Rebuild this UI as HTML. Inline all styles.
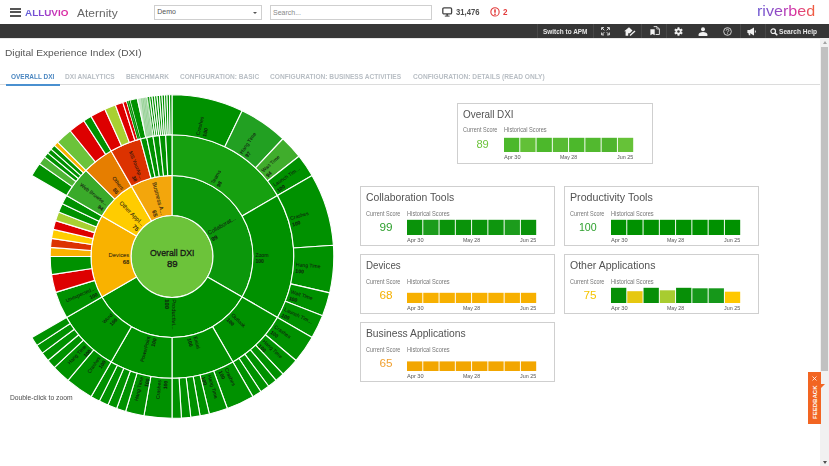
<!DOCTYPE html>
<html><head><meta charset="utf-8">
<style>
*{margin:0;padding:0;box-sizing:border-box}
html,body{width:829px;height:466px;overflow:hidden;background:#fff;font-family:"Liberation Sans",sans-serif;color:#444}
.a{position:absolute}
.t{position:absolute;white-space:nowrap;transform-origin:0 0;line-height:1}
#hdr{left:0;top:0;width:829px;height:24px;background:#fff}
#bar{left:0;top:23.8px;width:829px;height:13.8px;background:#363636}
.sep{position:absolute;top:24px;width:1px;height:14px;background:#474747}
.card{position:absolute;border:1px solid #cfcfcf;background:#fff}
.bars{position:absolute;height:16px}
.bar{position:absolute;bottom:0;width:15.3px}
.sb{position:absolute;left:0;top:0}
</style></head><body>
<div id="hdr" class="a"></div>
<div class="a" style="left:10px;top:8px;width:10.5px;height:1.8px;background:#555"></div>
<div class="a" style="left:10px;top:11.4px;width:10.5px;height:1.8px;background:#555"></div>
<div class="a" style="left:10px;top:14.8px;width:10.5px;height:1.8px;background:#555"></div>
<div class="t" style="left:25.00px;top:8.48px;font-size:9.9px;font-weight:bold;color:transparent;background:linear-gradient(90deg,#5b5fd6,#8b45d2 40%,#c733b8 70%,#e0259a);-webkit-background-clip:text;background-clip:text;">ALLUVIO</div>
<div class="t" style="left:76.80px;top:7.85px;font-size:11px;color:#666;transform:scaleX(1.090);">Aternity</div>
<div class="a" style="left:153.5px;top:4.5px;width:108px;height:15px;border:1px solid #cfcfcf"></div>
<div class="t" style="left:157.30px;top:8.35px;font-size:7px;color:#555;">Demo</div>
<div class="a" style="left:253px;top:11.5px;width:0;height:0;border-left:2.5px solid transparent;border-right:2.5px solid transparent;border-top:2.8px solid #555"></div>
<div class="a" style="left:270px;top:4.5px;width:162px;height:15px;border:1px solid #cfcfcf"></div>
<div class="t" style="left:273.00px;top:8.65px;font-size:7px;color:#888;">Search...</div>
<svg class="a" style="left:442px;top:7px" width="11" height="10" viewBox="0 0 11 10"><rect x="0.8" y="0.8" width="8.8" height="6.1" rx="1.2" fill="none" stroke="#444" stroke-width="1.3"/><rect x="4.3" y="7" width="1.8" height="1.8" fill="#444"/><rect x="2.8" y="8.6" width="4.8" height="1" fill="#444"/></svg>
<div class="t" style="left:455.90px;top:7.75px;font-size:9px;font-weight:bold;color:#4d4d4d;transform:scaleX(0.850);">31,476</div>
<svg class="a" style="left:490px;top:7px" width="10" height="10" viewBox="0 0 10 10"><circle cx="5" cy="4.9" r="4.15" fill="none" stroke="#e23b3b" stroke-width="1.1"/><rect x="4.2" y="2.3" width="1.6" height="3.5" rx="0.5" fill="#e23b3b"/><rect x="4.2" y="6.4" width="1.6" height="1.5" rx="0.5" fill="#e23b3b"/></svg>
<div class="t" style="left:503.20px;top:7.75px;font-size:9px;font-weight:bold;color:#e23b3b;transform:scaleX(0.900);">2</div>
<div class="t" style="left:756.50px;top:3.15px;font-size:15px;color:transparent;transform:scaleX(1.075);background:linear-gradient(90deg,#6a55d0,#9248c4 35%,#d42fa8 62%,#f2603a);-webkit-background-clip:text;background-clip:text;">riverbed</div>
<div id="bar" class="a"></div>
<div class="a" style="left:0;top:38px;width:829px;height:1px;background:#e8e8e8"></div>
<div class="sep" style="left:536.5px"></div>
<div class="sep" style="left:592.5px"></div>
<div class="sep" style="left:641px"></div>
<div class="sep" style="left:666px"></div>
<div class="sep" style="left:739.5px"></div>
<div class="sep" style="left:765px"></div>
<div class="t" style="left:542.7px;top:28.2px;font-size:7px;font-weight:bold;color:#e6e6e6;transform:scaleX(0.92)">Switch to APM</div>
<!-- fullscreen icon -->
<svg class="a" style="left:600.5px;top:27px" width="9" height="8.5" viewBox="0 0 9 8.5"><g fill="none" stroke="#ddd" stroke-width="1"><path d="M0.6 3V0.6H3M0.8 0.8L3.3 3.3"/><path d="M8.4 3V0.6H6M8.2 0.8L5.7 3.3"/><path d="M0.6 5.5V7.9H3M0.8 7.7L3.3 5.2"/><path d="M8.4 5.5V7.9H6M8.2 7.7L5.7 5.2"/></g></svg>
<!-- house edit -->
<svg class="a" style="left:624px;top:26.7px" width="12" height="9" viewBox="0 0 12 9"><path d="M5 0.2L0.2 4.2h1.4v4.5h2.6V6.3h1.6l2.7-2.7L5 0.2z" fill="#f2f2f2"/><path d="M6 8.4l5-4.4" stroke="#f2f2f2" stroke-width="1.3"/></svg>
<!-- copy icon -->
<svg class="a" style="left:649.5px;top:26.3px" width="10" height="9.5" viewBox="0 0 10 9.5"><path d="M3.7 0.6h3.3l2.4 2.4v5.5H5.6" fill="none" stroke="#eee" stroke-width="0.9"/><path d="M6.8 0.6v2.4h2.6" fill="none" stroke="#eee" stroke-width="0.7"/><path d="M0.4 3.2h4.3v6.1l-2.15-1.4-2.15 1.4z" fill="#f2f2f2"/></svg>
<!-- gear -->
<svg class="a" style="left:674px;top:27px" width="9" height="9" viewBox="0 0 10 10"><g fill="#eee"><circle cx="5" cy="5" r="3.3"/><rect x="3.9" y="0.2" width="2.2" height="9.6" rx="0.4"/><rect x="3.9" y="0.2" width="2.2" height="9.6" rx="0.4" transform="rotate(60 5 5)"/><rect x="3.9" y="0.2" width="2.2" height="9.6" rx="0.4" transform="rotate(-60 5 5)"/></g><circle cx="5" cy="5" r="1.4" fill="#363636"/></svg>
<!-- person -->
<svg class="a" style="left:698.3px;top:27px" width="10" height="9" viewBox="0 0 10 9" fill="#f0f0f0"><circle cx="5" cy="2.2" r="2"/><path d="M0.6 8.9V7.6C0.6 6 2.6 5 5 5S9.4 6 9.4 7.6V8.9z"/></svg>
<!-- question -->
<svg class="a" style="left:722.8px;top:27px" width="9" height="9" viewBox="0 0 9 9"><circle cx="4.5" cy="4.5" r="3.85" fill="none" stroke="#e6e6e6" stroke-width="0.85"/><path d="M3.2 3.6c0-0.8 0.55-1.35 1.3-1.35s1.3 0.5 1.3 1.2c0 0.95-1.25 1-1.25 2" fill="none" stroke="#e6e6e6" stroke-width="0.85"/><circle cx="4.55" cy="6.65" r="0.5" fill="#e6e6e6"/></svg>
<!-- megaphone -->
<svg class="a" style="left:747.3px;top:27.2px" width="10" height="9" viewBox="0 0 10 9" fill="#f0f0f0"><path d="M0.4 3.1h2.3L7 0.5v8L2.7 5.9H0.4z"/><path d="M1.3 5.6h1.5l0.6 2.6H1.9z"/><path d="M7.9 3c0.7 0.35 1 0.85 1 1.5s-0.3 1.15-1 1.5z"/></svg>
<!-- search help -->
<svg class="a" style="left:770px;top:27.5px" width="8" height="8" viewBox="0 0 8 8"><circle cx="3.2" cy="3.2" r="2.3" fill="none" stroke="#eee" stroke-width="1.2"/><path d="M4.9 4.9l2.4 2.4" stroke="#eee" stroke-width="1.5"/></svg>
<div class="t" style="left:778.5px;top:28.2px;font-size:7px;font-weight:bold;color:#e6e6e6;transform:scaleX(0.94)">Search Help</div>

<div class="t" style="left:4.80px;top:48.68px;font-size:9.2px;color:#555;transform:scaleX(1.110);">Digital Experience Index (DXI)</div>
<div class="a" style="left:0;top:84px;width:820px;height:1px;background:#dcdcdc"></div>
<div class="a" style="left:5.8px;top:83.7px;width:53.8px;height:2px;background:#4a90d0"></div>
<div class="t" style="left:11.00px;top:72.66px;font-size:7.7px;font-weight:bold;color:#4a86c0;transform:scaleX(0.841);">OVERALL DXI</div>
<div class="t" style="left:65.10px;top:72.66px;font-size:7.7px;font-weight:bold;color:#b8bec4;transform:scaleX(0.856);">DXI ANALYTICS</div>
<div class="t" style="left:125.90px;top:72.66px;font-size:7.7px;font-weight:bold;color:#b8bec4;transform:scaleX(0.852);">BENCHMARK</div>
<div class="t" style="left:180.10px;top:72.66px;font-size:7.7px;font-weight:bold;color:#b8bec4;transform:scaleX(0.851);">CONFIGURATION: BASIC</div>
<div class="t" style="left:270.10px;top:72.66px;font-size:7.7px;font-weight:bold;color:#b8bec4;transform:scaleX(0.860);">CONFIGURATION: BUSINESS ACTIVITIES</div>
<div class="t" style="left:412.90px;top:72.66px;font-size:7.7px;font-weight:bold;color:#b8bec4;transform:scaleX(0.860);">CONFIGURATION: DETAILS (READ ONLY)</div>
<svg class="sb" width="345" height="466" viewBox="0 0 345 466"><g stroke="#fff" stroke-width="1.1" stroke-linejoin="round">
<circle cx="172.0" cy="256.5" r="41" fill="#6cc33a"/>
<path d="M172.00,175.50A81,81 0 0 1 242.15,297.00L207.51,277.00A41,41 0 0 0 172.00,215.50Z" fill="#0b970b"/>
<path d="M242.15,297.00A81,81 0 0 1 101.85,297.00L136.49,277.00A41,41 0 0 0 207.51,277.00Z" fill="#009100"/>
<path d="M101.85,297.00A81,81 0 0 1 101.85,216.00L136.49,236.00A41,41 0 0 0 136.49,277.00Z" fill="#f9b200"/>
<path d="M101.85,216.00A81,81 0 0 1 131.50,186.35L151.50,220.99A41,41 0 0 0 136.49,236.00Z" fill="#ffcc00"/>
<path d="M131.50,186.35A81,81 0 0 1 172.00,175.50L172.00,215.50A41,41 0 0 0 151.50,220.99Z" fill="#f3a60c"/>
<path d="M172.00,134.70A121.8,121.8 0 0 1 277.48,195.60L242.15,216.00A81,81 0 0 0 172.00,175.50Z" fill="#16a010"/>
<path d="M277.48,195.60A121.8,121.8 0 0 1 277.48,317.40L242.15,297.00A81,81 0 0 0 242.15,216.00Z" fill="#009100"/>
<path d="M277.48,317.40A121.8,121.8 0 0 1 232.90,361.98L212.50,326.65A81,81 0 0 0 242.15,297.00Z" fill="#009100"/>
<path d="M232.90,361.98A121.8,121.8 0 0 1 172.00,378.30L172.00,337.50A81,81 0 0 0 212.50,326.65Z" fill="#009100"/>
<path d="M172.00,378.30A121.8,121.8 0 0 1 111.10,361.98L131.50,326.65A81,81 0 0 0 172.00,337.50Z" fill="#009100"/>
<path d="M111.10,361.98A121.8,121.8 0 0 1 66.52,317.40L101.85,297.00A81,81 0 0 0 131.50,326.65Z" fill="#009100"/>
<path d="M66.52,317.40A121.8,121.8 0 0 1 55.61,292.40L94.60,280.38A81,81 0 0 0 101.85,297.00Z" fill="#009100"/>
<path d="M55.61,292.40A121.8,121.8 0 0 1 51.56,274.65L91.90,268.57A81,81 0 0 0 94.60,280.38Z" fill="#dd0000"/>
<path d="M51.56,274.65A121.8,121.8 0 0 1 50.20,256.50L91.00,256.50A81,81 0 0 0 91.90,268.57Z" fill="#009100"/>
<path d="M50.20,256.50A121.8,121.8 0 0 1 50.54,247.40L91.23,250.45A81,81 0 0 0 91.00,256.50Z" fill="#f9b200"/>
<path d="M50.54,247.40A121.8,121.8 0 0 1 51.56,238.35L91.90,244.43A81,81 0 0 0 91.23,250.45Z" fill="#dc3200"/>
<path d="M51.56,238.35A121.8,121.8 0 0 1 53.25,229.40L93.03,238.48A81,81 0 0 0 91.90,244.43Z" fill="#ffcc00"/>
<path d="M53.25,229.40A121.8,121.8 0 0 1 55.61,220.60L94.60,232.62A81,81 0 0 0 93.03,238.48Z" fill="#dd0000"/>
<path d="M55.61,220.60A121.8,121.8 0 0 1 58.62,212.00L96.60,226.91A81,81 0 0 0 94.60,232.62Z" fill="#a8d032"/>
<path d="M58.62,212.00A121.8,121.8 0 0 1 62.26,203.65L99.02,221.36A81,81 0 0 0 96.60,226.91Z" fill="#009100"/>
<path d="M62.26,203.65A121.8,121.8 0 0 1 66.52,195.60L101.85,216.00A81,81 0 0 0 99.02,221.36Z" fill="#009100"/>
<path d="M66.52,195.60A121.8,121.8 0 0 1 85.87,170.37L114.72,199.22A81,81 0 0 0 101.85,216.00Z" fill="#3aaa2a"/>
<path d="M85.87,170.37A121.8,121.8 0 0 1 111.10,151.02L131.50,186.35A81,81 0 0 0 114.72,199.22Z" fill="#e67e00"/>
<path d="M111.10,151.02A121.8,121.8 0 0 1 140.48,138.85L151.04,178.26A81,81 0 0 0 131.50,186.35Z" fill="#dc3200"/>
<path d="M140.48,138.85A121.8,121.8 0 0 1 146.68,137.36L155.16,177.27A81,81 0 0 0 151.04,178.26Z" fill="#009100"/>
<path d="M146.68,137.36A121.8,121.8 0 0 1 152.95,136.20L159.33,176.50A81,81 0 0 0 155.16,177.27Z" fill="#009100"/>
<path d="M152.95,136.20A121.8,121.8 0 0 1 159.27,135.37L163.53,175.94A81,81 0 0 0 159.33,176.50Z" fill="#009100"/>
<path d="M159.27,135.37A121.8,121.8 0 0 1 165.63,134.87L167.76,175.61A81,81 0 0 0 163.53,175.94Z" fill="#009100"/>
<path d="M165.63,134.87A121.8,121.8 0 0 1 172.00,134.70L172.00,175.50A81,81 0 0 0 167.76,175.61Z" fill="#009100"/>
<path d="M172.00,94.70A161.8,161.8 0 0 1 242.17,110.71L224.82,146.75A121.8,121.8 0 0 0 172.00,134.70Z" fill="#009100"/>
<path d="M242.17,110.71A161.8,161.8 0 0 1 282.97,138.75L255.53,167.86A121.8,121.8 0 0 0 224.82,146.75Z" fill="#22a022"/>
<path d="M282.97,138.75A161.8,161.8 0 0 1 298.98,156.22L267.59,181.01A121.8,121.8 0 0 0 255.53,167.86Z" fill="#40ad2c"/>
<path d="M298.98,156.22A161.8,161.8 0 0 1 312.12,175.60L277.48,195.60A121.8,121.8 0 0 0 267.59,181.01Z" fill="#009100"/>
<path d="M312.12,175.60A161.8,161.8 0 0 1 333.41,245.21L293.50,248.00A121.8,121.8 0 0 0 277.48,195.60Z" fill="#009100"/>
<path d="M333.41,245.21A161.8,161.8 0 0 1 329.65,292.90L290.68,283.90A121.8,121.8 0 0 0 293.50,248.00Z" fill="#009100"/>
<path d="M329.65,292.90A161.8,161.8 0 0 1 322.54,315.80L285.32,301.14A121.8,121.8 0 0 0 290.68,283.90Z" fill="#009100"/>
<path d="M322.54,315.80A161.8,161.8 0 0 1 312.12,337.40L277.48,317.40A121.8,121.8 0 0 0 285.32,301.14Z" fill="#009100"/>
<path d="M312.12,337.40A161.8,161.8 0 0 1 295.95,360.50L265.30,334.79A121.8,121.8 0 0 0 277.48,317.40Z" fill="#009100"/>
<path d="M295.95,360.50A161.8,161.8 0 0 1 283.03,374.19L255.58,345.09A121.8,121.8 0 0 0 265.30,334.79Z" fill="#009100"/>
<path d="M283.03,374.19A161.8,161.8 0 0 1 276.00,380.45L250.29,349.80A121.8,121.8 0 0 0 255.58,345.09Z" fill="#009100"/>
<path d="M276.00,380.45A161.8,161.8 0 0 1 268.62,386.28L244.73,354.20A121.8,121.8 0 0 0 250.29,349.80Z" fill="#009100"/>
<path d="M268.62,386.28A161.8,161.8 0 0 1 260.91,391.68L238.93,358.26A121.8,121.8 0 0 0 244.73,354.20Z" fill="#009100"/>
<path d="M260.91,391.68A161.8,161.8 0 0 1 252.90,396.62L232.90,361.98A121.8,121.8 0 0 0 238.93,358.26Z" fill="#009100"/>
<path d="M252.90,396.62A161.8,161.8 0 0 1 227.34,408.54L213.66,370.95A121.8,121.8 0 0 0 232.90,361.98Z" fill="#009100"/>
<path d="M227.34,408.54A161.8,161.8 0 0 1 209.31,413.94L200.09,375.02A121.8,121.8 0 0 0 213.66,370.95Z" fill="#009100"/>
<path d="M209.31,413.94A161.8,161.8 0 0 1 200.10,415.84L193.15,376.45A121.8,121.8 0 0 0 200.09,375.02Z" fill="#009100"/>
<path d="M200.10,415.84A161.8,161.8 0 0 1 190.78,417.21L186.14,377.48A121.8,121.8 0 0 0 193.15,376.45Z" fill="#009100"/>
<path d="M190.78,417.21A161.8,161.8 0 0 1 181.41,418.03L179.08,378.09A121.8,121.8 0 0 0 186.14,377.48Z" fill="#009100"/>
<path d="M181.41,418.03A161.8,161.8 0 0 1 172.00,418.30L172.00,378.30A121.8,121.8 0 0 0 179.08,378.09Z" fill="#009100"/>
<path d="M172.00,418.30A161.8,161.8 0 0 1 143.90,415.84L150.85,376.45A121.8,121.8 0 0 0 172.00,378.30Z" fill="#009100"/>
<path d="M143.90,415.84A161.8,161.8 0 0 1 125.60,411.50L137.07,373.18A121.8,121.8 0 0 0 150.85,376.45Z" fill="#009100"/>
<path d="M125.60,411.50A161.8,161.8 0 0 1 116.66,408.54L130.34,370.95A121.8,121.8 0 0 0 137.07,373.18Z" fill="#009100"/>
<path d="M116.66,408.54A161.8,161.8 0 0 1 107.91,405.07L123.76,368.34A121.8,121.8 0 0 0 130.34,370.95Z" fill="#009100"/>
<path d="M107.91,405.07A161.8,161.8 0 0 1 99.38,401.09L117.34,365.34A121.8,121.8 0 0 0 123.76,368.34Z" fill="#009100"/>
<path d="M99.38,401.09A161.8,161.8 0 0 1 91.10,396.62L111.10,361.98A121.8,121.8 0 0 0 117.34,365.34Z" fill="#009100"/>
<path d="M91.10,396.62A161.8,161.8 0 0 1 68.00,380.45L93.71,349.80A121.8,121.8 0 0 0 111.10,361.98Z" fill="#009100"/>
<path d="M68.00,380.45A161.8,161.8 0 0 1 54.31,367.53L83.41,340.08A121.8,121.8 0 0 0 93.71,349.80Z" fill="#009100"/>
<path d="M54.31,367.53A161.8,161.8 0 0 1 48.05,360.50L78.70,334.79A121.8,121.8 0 0 0 83.41,340.08Z" fill="#009100"/>
<path d="M48.05,360.50A161.8,161.8 0 0 1 42.22,353.12L74.30,329.23A121.8,121.8 0 0 0 78.70,334.79Z" fill="#009100"/>
<path d="M42.22,353.12A161.8,161.8 0 0 1 36.82,345.41L70.24,323.43A121.8,121.8 0 0 0 74.30,329.23Z" fill="#009100"/>
<path d="M36.82,345.41A161.8,161.8 0 0 1 31.88,337.40L66.52,317.40A121.8,121.8 0 0 0 70.24,323.43Z" fill="#009100"/>
<path d="M31.88,175.60A161.8,161.8 0 0 1 39.46,163.70L72.23,186.64A121.8,121.8 0 0 0 66.52,195.60Z" fill="#009100"/>
<path d="M39.46,163.70A161.8,161.8 0 0 1 44.50,156.89L76.02,181.51A121.8,121.8 0 0 0 72.23,186.64Z" fill="#4fb535"/>
<path d="M44.50,156.89A161.8,161.8 0 0 1 47.69,152.93L78.42,178.53A121.8,121.8 0 0 0 76.02,181.51Z" fill="#009100"/>
<path d="M47.69,152.93A161.8,161.8 0 0 1 51.01,149.08L80.92,175.63A121.8,121.8 0 0 0 78.42,178.53Z" fill="#009100"/>
<path d="M51.01,149.08A161.8,161.8 0 0 1 54.44,145.33L83.50,172.81A121.8,121.8 0 0 0 80.92,175.63Z" fill="#009100"/>
<path d="M54.44,145.33A161.8,161.8 0 0 1 57.59,142.09L85.87,170.37A121.8,121.8 0 0 0 83.50,172.81Z" fill="#f9b200"/>
<path d="M57.59,142.09A161.8,161.8 0 0 1 70.18,130.76L95.35,161.84A121.8,121.8 0 0 0 85.87,170.37Z" fill="#6cc33a"/>
<path d="M70.18,130.76A161.8,161.8 0 0 1 83.88,120.80L105.66,154.35A121.8,121.8 0 0 0 95.35,161.84Z" fill="#dd0000"/>
<path d="M83.88,120.80A161.8,161.8 0 0 1 91.10,116.38L111.10,151.02A121.8,121.8 0 0 0 105.66,154.35Z" fill="#009100"/>
<path d="M91.10,116.38A161.8,161.8 0 0 1 104.90,109.27L121.49,145.67A121.8,121.8 0 0 0 111.10,151.02Z" fill="#dd0000"/>
<path d="M104.90,109.27A161.8,161.8 0 0 1 115.34,104.95L129.34,142.41A121.8,121.8 0 0 0 121.49,145.67Z" fill="#a8d032"/>
<path d="M115.34,104.95A161.8,161.8 0 0 1 122.81,102.36L134.97,140.47A121.8,121.8 0 0 0 129.34,142.41Z" fill="#dd0000"/>
<path d="M122.81,102.36A161.8,161.8 0 0 1 126.59,101.20L137.81,139.60A121.8,121.8 0 0 0 134.97,140.47Z" fill="#dd0000"/>
<path d="M126.59,101.20A161.8,161.8 0 0 1 129.85,100.29L140.27,138.91A121.8,121.8 0 0 0 137.81,139.60Z" fill="#ffffff"/>
<path d="M129.85,100.29A161.8,161.8 0 0 1 137.26,98.47L145.85,137.54A121.8,121.8 0 0 0 140.27,138.91Z" fill="#009100"/>
<path d="M137.26,98.47A161.8,161.8 0 0 1 146.97,96.65L153.16,136.17A121.8,121.8 0 0 0 145.85,137.54Z" fill="#c4e4c4"/>
<path d="M146.97,96.65A161.8,161.8 0 0 1 149.45,96.28L155.03,135.89A121.8,121.8 0 0 0 153.16,136.17Z" fill="#009100"/>
<path d="M149.45,96.28A161.8,161.8 0 0 1 151.95,95.95L156.90,135.64A121.8,121.8 0 0 0 155.03,135.89Z" fill="#009100"/>
<path d="M151.95,95.95A161.8,161.8 0 0 1 154.44,95.66L158.78,135.42A121.8,121.8 0 0 0 156.90,135.64Z" fill="#009100"/>
<path d="M154.44,95.66A161.8,161.8 0 0 1 156.94,95.40L160.66,135.23A121.8,121.8 0 0 0 158.78,135.42Z" fill="#009100"/>
<path d="M156.94,95.40A161.8,161.8 0 0 1 159.45,95.19L162.55,135.07A121.8,121.8 0 0 0 160.66,135.23Z" fill="#009100"/>
<path d="M159.45,95.19A161.8,161.8 0 0 1 161.95,95.01L164.44,134.94A121.8,121.8 0 0 0 162.55,135.07Z" fill="#009100"/>
<path d="M161.95,95.01A161.8,161.8 0 0 1 164.46,94.88L166.33,134.83A121.8,121.8 0 0 0 164.44,134.94Z" fill="#009100"/>
<path d="M164.46,94.88A161.8,161.8 0 0 1 166.97,94.78L168.22,134.76A121.8,121.8 0 0 0 166.33,134.83Z" fill="#009100"/>
<path d="M166.97,94.78A161.8,161.8 0 0 1 169.49,94.72L170.11,134.71A121.8,121.8 0 0 0 168.22,134.76Z" fill="#009100"/>
<path d="M169.49,94.72A161.8,161.8 0 0 1 172.00,94.70L172.00,134.70A121.8,121.8 0 0 0 170.11,134.71Z" fill="#009100"/>
<path d="M138.23,138.75L127.48,101.26" stroke="#009100" stroke-width="1.4"/>
<path d="M139.47,138.40L129.11,100.80" stroke="#009100" stroke-width="1.4"/>
<path d="M146.26,136.43L141.59,98.60" stroke="#6abf6a" stroke-width="0.5"/>
<path d="M147.41,136.19L143.11,98.32" stroke="#6abf6a" stroke-width="0.5"/>
<path d="M148.57,135.96L144.63,98.05" stroke="#6abf6a" stroke-width="0.5"/>
<path d="M149.73,135.74L146.15,97.79" stroke="#6abf6a" stroke-width="0.5"/>
<path d="M150.89,135.53L147.68,97.55" stroke="#6abf6a" stroke-width="0.5"/>
<path d="M152.05,135.33L149.20,97.32" stroke="#6abf6a" stroke-width="0.5"/>
</g><g fill="#111" fill-opacity="0.85" stroke="#111" stroke-opacity="0.5" stroke-width="0.15" font-family="Liberation Sans, sans-serif"><g transform="translate(209.07,235.10) rotate(-30.00)"><text x="0" y="0" font-size="5.8" text-anchor="start">Collaborat...</text><text x="0" y="7.4" font-size="5.8" font-weight="bold" text-anchor="start">99</text></g>
<g transform="translate(172.00,299.30) rotate(90.00)"><text x="0" y="0" font-size="5.8" text-anchor="start">Productivi...</text><text x="0" y="7.4" font-size="5.8" font-weight="bold" text-anchor="start">100</text></g>
<g transform="translate(129.20,256.50) rotate(0.00)"><text x="0" y="0" font-size="5.8" text-anchor="end">Devices</text><text x="0" y="7.4" font-size="5.8" font-weight="bold" text-anchor="end">68</text></g>
<g transform="translate(141.74,226.24) rotate(45.00)"><text x="0" y="0" font-size="5.8" text-anchor="end">Other Appl...</text><text x="0" y="7.4" font-size="5.8" font-weight="bold" text-anchor="end">75</text></g>
<g transform="translate(160.92,215.16) rotate(75.00)"><text x="0" y="0" font-size="5.8" text-anchor="end">Business A...</text><text x="0" y="7.4" font-size="5.8" font-weight="bold" text-anchor="end">65</text></g>
<g transform="translate(213.70,184.27) rotate(-60.00)"><text x="0" y="0" font-size="5.1" text-anchor="start">Teams</text><text x="0" y="6.6" font-size="5.1" font-weight="bold" text-anchor="start">98</text></g>
<g transform="translate(255.40,256.50) rotate(0.00)"><text x="0" y="0" font-size="5.1" text-anchor="start">Zoom</text><text x="0" y="6.6" font-size="5.1" font-weight="bold" text-anchor="start">100</text></g>
<g transform="translate(230.97,315.47) rotate(45.00)"><text x="0" y="0" font-size="5.1" text-anchor="start">Outlook</text><text x="0" y="6.6" font-size="5.1" font-weight="bold" text-anchor="start">100</text></g>
<g transform="translate(193.59,337.06) rotate(75.00)"><text x="0" y="0" font-size="5.1" text-anchor="start">Excel</text><text x="0" y="6.6" font-size="5.1" font-weight="bold" text-anchor="start">100</text></g>
<g transform="translate(150.41,337.06) rotate(-75.00)"><text x="0" y="0" font-size="5.1" text-anchor="end">PowerPoint</text><text x="0" y="6.6" font-size="5.1" font-weight="bold" text-anchor="end">100</text></g>
<g transform="translate(113.03,315.47) rotate(-45.00)"><text x="0" y="0" font-size="5.1" text-anchor="end">Word</text><text x="0" y="6.6" font-size="5.1" font-weight="bold" text-anchor="end">100</text></g>
<g transform="translate(95.56,289.85) rotate(-23.57)"><text x="0" y="0" font-size="5.1" text-anchor="end">Unexpected...</text><text x="0" y="6.6" font-size="5.1" font-weight="bold" text-anchor="end">100</text></g>
<g transform="translate(105.83,205.73) rotate(37.50)"><text x="0" y="0" font-size="5.1" text-anchor="end">Web Browse...</text><text x="0" y="6.6" font-size="5.1" font-weight="bold" text-anchor="end">94</text></g>
<g transform="translate(121.23,190.33) rotate(52.50)"><text x="0" y="0" font-size="5.1" text-anchor="end">Others</text><text x="0" y="6.6" font-size="5.1" font-weight="bold" text-anchor="end">55</text></g>
<g transform="translate(140.08,179.45) rotate(67.50)"><text x="0" y="0" font-size="5.1" text-anchor="end">MS YourAp...</text><text x="0" y="6.6" font-size="5.1" font-weight="bold" text-anchor="end">38</text></g>
<g transform="translate(199.62,135.41) rotate(-77.15)"><text x="0" y="0" font-size="5.1" text-anchor="start">Crashes</text><text x="0" y="6.6" font-size="5.1" font-weight="bold" text-anchor="start">100</text></g>
<g transform="translate(242.35,154.14) rotate(-55.50)"><text x="0" y="0" font-size="5.1" text-anchor="start">Hang Time</text><text x="0" y="6.6" font-size="5.1" font-weight="bold" text-anchor="start">97</text></g>
<g transform="translate(263.57,172.59) rotate(-42.50)"><text x="0" y="0" font-size="5.1" text-anchor="start">Wait Time</text><text x="0" y="6.6" font-size="5.1" font-weight="bold" text-anchor="start">94</text></g>
<g transform="translate(274.78,186.78) rotate(-34.15)"><text x="0" y="0" font-size="5.1" text-anchor="start">Launch Tim...</text><text x="0" y="6.6" font-size="5.1" font-weight="bold" text-anchor="start">100</text></g>
<g transform="translate(290.77,220.19) rotate(-17.00)"><text x="0" y="0" font-size="5.1" text-anchor="start">Crashes</text><text x="0" y="6.6" font-size="5.1" font-weight="bold" text-anchor="start">100</text></g>
<g transform="translate(295.82,266.24) rotate(4.50)"><text x="0" y="0" font-size="5.1" text-anchor="start">Hang Time</text><text x="0" y="6.6" font-size="5.1" font-weight="bold" text-anchor="start">100</text></g>
<g transform="translate(290.61,293.33) rotate(17.25)"><text x="0" y="0" font-size="5.1" text-anchor="start">Wait Time</text><text x="0" y="6.6" font-size="5.1" font-weight="bold" text-anchor="start">100</text></g>
<g transform="translate(283.87,310.46) rotate(25.75)"><text x="0" y="0" font-size="5.1" text-anchor="start">Launch Tim...</text><text x="0" y="6.6" font-size="5.1" font-weight="bold" text-anchor="start">100</text></g>
<g transform="translate(273.74,327.74) rotate(35.00)"><text x="0" y="0" font-size="5.1" text-anchor="start">Crashes</text><text x="0" y="6.6" font-size="5.1" font-weight="bold" text-anchor="start">100</text></g>
<g transform="translate(262.34,341.73) rotate(43.33)"><text x="0" y="0" font-size="5.1" text-anchor="start">Hang Time</text><text x="0" y="6.6" font-size="5.1" font-weight="bold" text-anchor="start">100</text></g>
<g transform="translate(224.49,369.06) rotate(65.00)"><text x="0" y="0" font-size="5.1" text-anchor="start">Crashes</text><text x="0" y="6.6" font-size="5.1" font-weight="bold" text-anchor="start">100</text></g>
<g transform="translate(207.62,375.48) rotate(73.33)"><text x="0" y="0" font-size="5.1" text-anchor="start">Hang Time</text><text x="0" y="6.6" font-size="5.1" font-weight="bold" text-anchor="start">100</text></g>
<g transform="translate(161.18,380.23) rotate(-85.00)"><text x="0" y="0" font-size="5.1" text-anchor="end">Crashes</text><text x="0" y="6.6" font-size="5.1" font-weight="bold" text-anchor="end">100</text></g>
<g transform="translate(143.36,377.35) rotate(-76.67)"><text x="0" y="0" font-size="5.1" text-anchor="end">Hang Time</text><text x="0" y="6.6" font-size="5.1" font-weight="bold" text-anchor="end">100</text></g>
<g transform="translate(100.76,358.24) rotate(-55.00)"><text x="0" y="0" font-size="5.1" text-anchor="end">Crashes</text><text x="0" y="6.6" font-size="5.1" font-weight="bold" text-anchor="end">100</text></g>
<g transform="translate(86.77,346.84) rotate(-46.67)"><text x="0" y="0" font-size="5.1" text-anchor="end">Hang Time</text><text x="0" y="6.6" font-size="5.1" font-weight="bold" text-anchor="end">100</text></g><text x="172.3" y="256.3" font-size="9.8" text-anchor="middle" fill="#1a1a1a" fill-opacity="1" stroke-width="0.4" stroke-opacity="0.8" textLength="44.5" lengthAdjust="spacingAndGlyphs">Overall DXI</text><text x="172.3" y="266.5" font-size="9.6" text-anchor="middle" fill="#1a1a1a" fill-opacity="1" stroke-width="0.4" stroke-opacity="0.8">89</text></g></svg>
<div class="t" style="left:10.3px;top:393.6px;font-size:7px;color:#4a4a4a;transform:scaleX(0.962)">Double-click to zoom</div>

<div class="card" style="left:457px;top:103px;width:196px;height:60.6px"></div>
<div class="t" style="left:463.00px;top:108.67px;font-size:10.5px;color:#525252;transform:scaleX(0.943);">Overall DXI</div>
<div class="t" style="left:463.00px;top:126.86px;font-size:6.4px;color:#777;transform:scaleX(0.864);">Current Score</div>
<div class="t" style="left:503.60px;top:126.86px;font-size:6.4px;color:#777;transform:scaleX(0.891);">Historical Scores</div>
<div class="t" style="right:340.00px;top:139.39px;font-size:10.6px;color:#6cc33a;transform-origin:100% 0;transform:scaleX(1.050);">89</div>
<svg class="a" style="left:503.80px;top:131.80px" width="131" height="20"><rect x="0.00" y="5.80" width="15.3" height="14.2" fill="#4cb82b"/><rect x="16.27" y="5.80" width="15.3" height="14.2" fill="#62c037"/><rect x="32.54" y="5.80" width="15.3" height="14.2" fill="#4cb82b"/><rect x="48.81" y="5.80" width="15.3" height="14.2" fill="#58bb33"/><rect x="65.08" y="5.80" width="15.3" height="14.2" fill="#4cb82b"/><rect x="81.35" y="5.80" width="15.3" height="14.2" fill="#52b92f"/><rect x="97.62" y="5.80" width="15.3" height="14.2" fill="#4fb52d"/><rect x="113.89" y="5.80" width="15.3" height="14.2" fill="#66c238"/></svg>
<div class="t" style="left:504.10px;top:153.63px;font-size:6.2px;color:#555;transform:scaleX(0.914);">Apr 30</div>
<div class="t" style="left:559.80px;top:153.63px;font-size:6.2px;color:#555;transform:scaleX(0.846);">May 28</div>
<div class="t" style="left:617.30px;top:153.63px;font-size:6.2px;color:#555;transform:scaleX(0.870);">Jun 25</div>
<div class="card" style="left:360px;top:186.0px;width:195px;height:59.8px"></div>
<div class="t" style="left:365.80px;top:191.97px;font-size:10.5px;color:#525252;transform:scaleX(0.989);">Collaboration Tools</div>
<div class="t" style="left:365.80px;top:211.16px;font-size:6.4px;color:#777;transform:scaleX(0.864);">Current Score</div>
<div class="t" style="left:406.60px;top:211.16px;font-size:6.4px;color:#777;transform:scaleX(0.891);">Historical Scores</div>
<div class="t" style="right:437.00px;top:221.68px;font-size:11.2px;color:#2ea02e;transform-origin:100% 0;transform:scaleX(1.050);">99</div>
<svg class="a" style="left:406.80px;top:214.90px" width="131" height="20"><rect x="0.00" y="4.80" width="15.3" height="15.2" fill="#0a930a"/><rect x="16.27" y="4.80" width="15.3" height="15.2" fill="#1c9c1c"/><rect x="32.54" y="4.80" width="15.3" height="15.2" fill="#0a930a"/><rect x="48.81" y="4.80" width="15.3" height="15.2" fill="#0a930a"/><rect x="65.08" y="4.80" width="15.3" height="15.2" fill="#0a930a"/><rect x="81.35" y="4.80" width="15.3" height="15.2" fill="#0e960e"/><rect x="97.62" y="4.80" width="15.3" height="15.2" fill="#1c9c1c"/><rect x="113.89" y="4.80" width="15.3" height="15.2" fill="#0a930a"/></svg>
<div class="t" style="left:407.10px;top:237.03px;font-size:6.2px;color:#555;transform:scaleX(0.914);">Apr 30</div>
<div class="t" style="left:462.80px;top:237.03px;font-size:6.2px;color:#555;transform:scaleX(0.846);">May 28</div>
<div class="t" style="left:520.30px;top:237.03px;font-size:6.2px;color:#555;transform:scaleX(0.870);">Jun 25</div>
<div class="card" style="left:564px;top:186.0px;width:195px;height:59.8px"></div>
<div class="t" style="left:569.80px;top:191.97px;font-size:10.5px;color:#525252;transform:scaleX(1.016);">Productivity Tools</div>
<div class="t" style="left:569.80px;top:211.16px;font-size:6.4px;color:#777;transform:scaleX(0.864);">Current Score</div>
<div class="t" style="left:610.60px;top:211.16px;font-size:6.4px;color:#777;transform:scaleX(0.891);">Historical Scores</div>
<div class="t" style="right:232.40px;top:221.68px;font-size:11.2px;color:#2ea02e;transform-origin:100% 0;transform:scaleX(0.950);">100</div>
<svg class="a" style="left:610.80px;top:214.90px" width="131" height="20"><rect x="0.00" y="4.80" width="15.3" height="15.2" fill="#009100"/><rect x="16.27" y="4.80" width="15.3" height="15.2" fill="#009100"/><rect x="32.54" y="4.80" width="15.3" height="15.2" fill="#009100"/><rect x="48.81" y="4.80" width="15.3" height="15.2" fill="#009100"/><rect x="65.08" y="4.80" width="15.3" height="15.2" fill="#009100"/><rect x="81.35" y="4.80" width="15.3" height="15.2" fill="#009100"/><rect x="97.62" y="4.80" width="15.3" height="15.2" fill="#009100"/><rect x="113.89" y="4.80" width="15.3" height="15.2" fill="#009100"/></svg>
<div class="t" style="left:611.10px;top:237.03px;font-size:6.2px;color:#555;transform:scaleX(0.914);">Apr 30</div>
<div class="t" style="left:666.80px;top:237.03px;font-size:6.2px;color:#555;transform:scaleX(0.846);">May 28</div>
<div class="t" style="left:724.30px;top:237.03px;font-size:6.2px;color:#555;transform:scaleX(0.870);">Jun 25</div>
<div class="card" style="left:360px;top:254.1px;width:195px;height:59.8px"></div>
<div class="t" style="left:365.80px;top:260.07px;font-size:10.5px;color:#525252;transform:scaleX(0.929);">Devices</div>
<div class="t" style="left:365.80px;top:279.26px;font-size:6.4px;color:#777;transform:scaleX(0.864);">Current Score</div>
<div class="t" style="left:406.60px;top:279.26px;font-size:6.4px;color:#777;transform:scaleX(0.891);">Historical Scores</div>
<div class="t" style="right:437.00px;top:289.78px;font-size:11.2px;color:#f5b000;transform-origin:100% 0;transform:scaleX(1.050);">68</div>
<svg class="a" style="left:406.80px;top:283.00px" width="131" height="20"><rect x="0.00" y="9.80" width="15.3" height="10.2" fill="#f7b000"/><rect x="16.27" y="9.80" width="15.3" height="10.2" fill="#f7b000"/><rect x="32.54" y="9.80" width="15.3" height="10.2" fill="#f7b000"/><rect x="48.81" y="9.80" width="15.3" height="10.2" fill="#f7b000"/><rect x="65.08" y="9.80" width="15.3" height="10.2" fill="#f7b000"/><rect x="81.35" y="9.80" width="15.3" height="10.2" fill="#f7b000"/><rect x="97.62" y="9.80" width="15.3" height="10.2" fill="#f7b000"/><rect x="113.89" y="9.80" width="15.3" height="10.2" fill="#f7b000"/></svg>
<div class="t" style="left:407.10px;top:305.13px;font-size:6.2px;color:#555;transform:scaleX(0.914);">Apr 30</div>
<div class="t" style="left:462.80px;top:305.13px;font-size:6.2px;color:#555;transform:scaleX(0.846);">May 28</div>
<div class="t" style="left:520.30px;top:305.13px;font-size:6.2px;color:#555;transform:scaleX(0.870);">Jun 25</div>
<div class="card" style="left:564px;top:254.1px;width:195px;height:59.8px"></div>
<div class="t" style="left:569.80px;top:260.07px;font-size:10.5px;color:#525252;transform:scaleX(1.002);">Other Applications</div>
<div class="t" style="left:569.80px;top:279.26px;font-size:6.4px;color:#777;transform:scaleX(0.864);">Current Score</div>
<div class="t" style="left:610.60px;top:279.26px;font-size:6.4px;color:#777;transform:scaleX(0.891);">Historical Scores</div>
<div class="t" style="right:233.00px;top:289.78px;font-size:11.2px;color:#f5c400;transform-origin:100% 0;transform:scaleX(1.050);">75</div>
<svg class="a" style="left:610.80px;top:283.00px" width="131" height="20"><rect x="0.00" y="4.80" width="15.3" height="15.2" fill="#078f07"/><rect x="16.27" y="8.20" width="15.3" height="11.8" fill="#e6c810"/><rect x="32.54" y="4.80" width="15.3" height="15.2" fill="#078f07"/><rect x="48.81" y="7.30" width="15.3" height="12.7" fill="#a8cc30"/><rect x="65.08" y="4.80" width="15.3" height="15.2" fill="#078f07"/><rect x="81.35" y="5.30" width="15.3" height="14.7" fill="#16981a"/><rect x="97.62" y="5.30" width="15.3" height="14.7" fill="#16981a"/><rect x="113.89" y="8.70" width="15.3" height="11.3" fill="#ffc800"/></svg>
<div class="t" style="left:611.10px;top:305.13px;font-size:6.2px;color:#555;transform:scaleX(0.914);">Apr 30</div>
<div class="t" style="left:666.80px;top:305.13px;font-size:6.2px;color:#555;transform:scaleX(0.846);">May 28</div>
<div class="t" style="left:724.30px;top:305.13px;font-size:6.2px;color:#555;transform:scaleX(0.870);">Jun 25</div>
<div class="card" style="left:360px;top:322.1px;width:195px;height:59.8px"></div>
<div class="t" style="left:365.80px;top:328.07px;font-size:10.5px;color:#525252;transform:scaleX(0.980);">Business Applications</div>
<div class="t" style="left:365.80px;top:347.26px;font-size:6.4px;color:#777;transform:scaleX(0.864);">Current Score</div>
<div class="t" style="left:406.60px;top:347.26px;font-size:6.4px;color:#777;transform:scaleX(0.891);">Historical Scores</div>
<div class="t" style="right:437.00px;top:357.78px;font-size:11.2px;color:#f0a030;transform-origin:100% 0;transform:scaleX(1.050);">65</div>
<svg class="a" style="left:406.80px;top:351.00px" width="131" height="20"><rect x="0.00" y="10.40" width="15.3" height="9.6" fill="#f2a600"/><rect x="16.27" y="10.40" width="15.3" height="9.6" fill="#f2a600"/><rect x="32.54" y="10.40" width="15.3" height="9.6" fill="#f2a600"/><rect x="48.81" y="10.40" width="15.3" height="9.6" fill="#f2a600"/><rect x="65.08" y="10.40" width="15.3" height="9.6" fill="#f2a600"/><rect x="81.35" y="10.40" width="15.3" height="9.6" fill="#f2a600"/><rect x="97.62" y="10.40" width="15.3" height="9.6" fill="#f2a600"/><rect x="113.89" y="10.40" width="15.3" height="9.6" fill="#f2a600"/></svg>
<div class="t" style="left:407.10px;top:373.13px;font-size:6.2px;color:#555;transform:scaleX(0.914);">Apr 30</div>
<div class="t" style="left:462.80px;top:373.13px;font-size:6.2px;color:#555;transform:scaleX(0.846);">May 28</div>
<div class="t" style="left:520.30px;top:373.13px;font-size:6.2px;color:#555;transform:scaleX(0.870);">Jun 25</div>

<!-- scrollbar -->
<div class="a" style="left:820px;top:38px;width:9px;height:428px;background:#f1f1f1"></div>
<div class="a" style="left:821px;top:47px;width:7px;height:324px;background:#c1c1c1"></div>
<div class="a" style="left:822.5px;top:41px;width:0;height:0;border-left:2.5px solid transparent;border-right:2.5px solid transparent;border-bottom:3px solid #a3a3a3"></div>
<div class="a" style="left:822.5px;top:461px;width:0;height:0;border-left:2.5px solid transparent;border-right:2.5px solid transparent;border-top:3px solid #505050"></div>
<!-- feedback -->
<div class="a" style="left:808px;top:372px;width:12.5px;height:51.5px;background:#f26522"></div>
<div class="a" style="left:820.5px;top:384px;width:0;height:0;border-top:4px solid #f26522;border-right:4px solid transparent"></div>
<svg class="a" style="left:812.2px;top:376.2px" width="5" height="5" viewBox="0 0 5 5"><path d="M0.5 0.5l4 4M4.5 0.5l-4 4" stroke="#fff" stroke-width="0.8"/></svg>
<div class="t" style="left:811.6px;top:418.8px;font-size:6px;font-weight:bold;color:#fff;transform:rotate(-90deg) scaleX(1.0);letter-spacing:0.02px">FEEDBACK</div>
</body></html>
